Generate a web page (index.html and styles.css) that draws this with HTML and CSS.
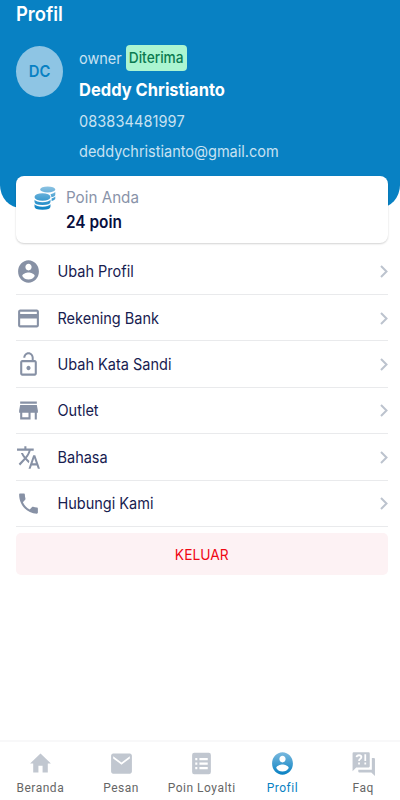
FILE: index.html
```html
<!DOCTYPE html>
<html lang="id">
<head>
<meta charset="utf-8">
<title>Profil</title>
<link rel="stylesheet" href="styles.css">
</head>
<body>
<div class="screen">
  <header class="hero">
    <h1 class="title"><span class="tall">Profil</span></h1>
    <div class="person">
      <div class="avatar"><span class="tall">DC</span></div>
      <div class="details">
        <div class="role"><span class="tall soft">owner</span><span class="badge"><span class="tall">Diterima</span></span></div>
        <div class="name"><span class="tall">Deddy Christianto</span></div>
        <div class="contact phone"><span class="tall soft">083834481997</span></div>
        <div class="contact mail"><span class="tall soft">deddychristianto@gmail.com</span></div>
      </div>
    </div>
  </header>
  <main class="content">
    <section class="points">
      <svg class="coins" viewBox="0 0 22 24">
        <defs><linearGradient id="blue" x1="0" y1="0" x2="0" y2="1"><stop offset="0" stop-color="#7bb9de"/><stop offset="1" stop-color="#0881c3"/></linearGradient>
        <linearGradient id="coin" gradientUnits="userSpaceOnUse" x1="0" y1="0" x2="0" y2="24"><stop offset="0" stop-color="#8fc4e3"/><stop offset="1" stop-color="#0881c3"/></linearGradient></defs>
        <g fill="url(#coin)"><ellipse cx="13.700" cy="3.400" rx="7.500" ry="3"/><path d="M16.500 8.200q3.500-.6 4.800-2.200v2.400q0 2-3.800 2.800zM17.600 12.400q2.700-.6 3.700-1.800v1.900q0 1.500-3.700 2.400z"/><ellipse cx="8.500" cy="11" rx="8" ry="3.800"/><path d="M.5 13.800q2 2.400 8 2.400t8-2.400v2q0 3.200-8 3.200t-8-3.200zM.5 18.300q2 2.400 8 2.400t8-2.400v2.200q0 3.200-8 3.200t-8-3.200z"/></g>
      </svg>
      <div><div class="points-label"><span class="tall">Poin Anda</span></div><div class="points-value"><span class="tall">24 poin</span></div></div>
    </section>
    <nav class="menu">
      <a class="item"><svg class="icon" viewBox="0 0 24 24" preserveAspectRatio="none"><path d="M12 2C6.480 2 2 6.480 2 12s4.480 10 10 10 10-4.480 10-10S17.520 2 12 2zm0 3c1.660 0 3 1.340 3 3s-1.340 3-3 3-3-1.340-3-3 1.340-3 3-3zm0 14.200c-2.500 0-4.710-1.280-6-3.220.030-1.990 4-3.080 6-3.080 1.990 0 5.970 1.090 6 3.080-1.290 1.940-3.500 3.220-6 3.220z"/></svg><span class="tall">Ubah Profil</span><svg class="chevron" viewBox="0 0 8 13"><path d="M1 1l5.500 5.500L1 12"/></svg></a>
      <a class="item"><svg class="icon" viewBox="0 0 24 24" preserveAspectRatio="none"><path d="M20 4H4c-1.110 0-1.990.890-1.990 2L2 18c0 1.110.890 2 2 2h16c1.110 0 2-.890 2-2V6c0-1.110-.890-2-2-2zm0 14H4v-6h16v6zm0-10H4V6h16v2z"/></svg><span class="tall">Rekening Bank</span><svg class="chevron" viewBox="0 0 8 13"><path d="M1 1l5.500 5.500L1 12"/></svg></a>
      <a class="item"><svg class="icon" viewBox="0 0 24 24" preserveAspectRatio="none"><path d="M12 17c1.100 0 2-.9 2-2s-.9-2-2-2-2 .9-2 2 .9 2 2 2zm6-9h-1V6c0-2.760-2.240-5-5-5S7 3.240 7 6h1.900c0-1.710 1.390-3.100 3.100-3.100 1.710 0 3.100 1.390 3.100 3.100v2H6c-1.100 0-2 .9-2 2v10c0 1.100.9 2 2 2h12c1.100 0 2-.9 2-2V10c0-1.100-.9-2-2-2zm0 12H6V10h12v10z"/></svg><span class="tall">Ubah Kata Sandi</span><svg class="chevron" viewBox="0 0 8 13"><path d="M1 1l5.500 5.500L1 12"/></svg></a>
      <a class="item"><svg class="icon" viewBox="0 0 24 24" preserveAspectRatio="none"><path d="M20 4H4v2h16V4zm1 10v-2l-1-5H4l-1 5v2h1v6h10v-6h4v6h2v-6h1zm-9 4H6v-4h6v4z"/></svg><span class="tall">Outlet</span><svg class="chevron" viewBox="0 0 8 13"><path d="M1 1l5.500 5.500L1 12"/></svg></a>
      <a class="item"><svg class="icon" viewBox="0 0 24 24" preserveAspectRatio="none"><path d="M12.870 15.070l-2.540-2.510.030-.030c1.740-1.940 2.980-4.170 3.710-6.530H17V4h-7V2H8v2H1v1.990h11.170C11.500 7.920 10.440 9.750 9 11.350 8.070 10.320 7.300 9.190 6.690 8h-2c.730 1.630 1.730 3.170 2.980 4.560l-5.090 5.020L4 19l5-5 3.110 3.110.760-2.040zM18.500 10h-2L12 22h2l1.120-3h4.750L21 22h2l-4.500-12zm-2.620 7l1.620-4.330L19.120 17h-3.240z"/></svg><span class="tall">Bahasa</span><svg class="chevron" viewBox="0 0 8 13"><path d="M1 1l5.500 5.500L1 12"/></svg></a>
      <a class="item"><svg class="icon" viewBox="0 0 24 24" preserveAspectRatio="none"><path d="M6.620 10.790c1.440 2.830 3.760 5.140 6.590 6.590l2.200-2.200c.270-.270.670-.360 1.020-.240 1.120.370 2.330.570 3.570.570.550 0 1 .450 1 1V20c0 .550-.450 1-1 1-9.390 0-17-7.610-17-17 0-.550.450-1 1-1h3.500c.550 0 1 .450 1 1 0 1.250.2 2.450.570 3.570.110.350.030.740-.250 1.020l-2.200 2.200z"/></svg><span class="tall">Hubungi Kami</span><svg class="chevron" viewBox="0 0 8 13"><path d="M1 1l5.500 5.500L1 12"/></svg></a>
    </nav>
    <button class="logout"><span class="tall">KELUAR</span></button>
  </main>
  <nav class="tabs">
    <a class="tab"><svg class="icon" viewBox="0 0 24 24" preserveAspectRatio="none"><path d="M10 20v-6h4v6h5v-8h3L12 3 2 12h3v8z"/></svg><span class="tall">Beranda</span></a>
    <a class="tab"><svg class="icon" viewBox="0 0 24 24" preserveAspectRatio="none"><path d="M20 3H4c-1.100 0-2 .9-2 2v14c0 1.100.9 2 2 2h16c1.100 0 2-.9 2-2V5c0-1.100-.9-2-2-2zm0 4.500l-8 5.500-8-5.500V5.500l8 5.500 8-5.500z"/></svg><span class="tall">Pesan</span></a>
    <a class="tab"><svg class="icon" viewBox="0 0 24 24" preserveAspectRatio="none"><path fill-rule="evenodd" d="M5 2.500h14q2 0 2 2v15q0 2-2 2H5q-2 0-2-2v-15q0-2 2-2zm1 4.500v2h2V7zm4 0v2h8V7zm-4 4v2h2v-2zm4 0v2h8v-2zm-4 4v2h2v-2zm4 0v2h8v-2z"/></svg><span class="tall">Poin Loyalti</span></a>
    <a class="tab active"><svg class="icon" viewBox="0 0 24 24" preserveAspectRatio="none"><path d="M12 2C6.480 2 2 6.480 2 12s4.480 10 10 10 10-4.480 10-10S17.520 2 12 2zm0 3c1.660 0 3 1.340 3 3s-1.340 3-3 3-3-1.340-3-3 1.340-3 3-3zm0 14.200c-2.500 0-4.710-1.280-6-3.220.030-1.990 4-3.080 6-3.080 1.990 0 5.970 1.090 6 3.080-1.290 1.940-3.500 3.220-6 3.220z"/></svg><span class="tall">Profil</span></a>
    <a class="tab"><svg class="icon" viewBox="0 0 24 24" preserveAspectRatio="none"><path d="M2.500 2h14.500q1 0 1 1v11.500q0 1-1 1H5l-3.500 3.300V3q0-1 1-1zM20 7H22q1 0 1 1v15L19.500 20H8q-1 0-1-1v-1.500h13z"/><path class="mark" d="M5.300 6.400q.3-1.800 2.400-1.800t2.300 1.600q0 1-1.300 1.800-1 .6-1 1.800M7.700 11v1.900M13.700 3.800v6M13.700 11v1.900"/></svg><span class="tall">Faq</span></a>
  </nav>
</div>
</body>
</html>
```
FILE: styles.css
```css
* { box-sizing: border-box; }
body { margin: 0; background: #fff; font-family: Inter, sans-serif; }
.screen { width: 400px; height: 800px; display: flex; flex-direction: column; overflow: hidden; }
.tall { display: inline-block; transform: scaleY(1.09); white-space: nowrap; }
.hero { height: 208px; flex: none; padding: 3px 16px 0; background: #0881c3; border-radius: 0 0 21px 21px / 0 0 23px 23px; color: #fff; }
.title { margin: 0; font-size: 18.400px; line-height: 21px; font-weight: 600; }
.person { display: flex; gap: 16px; margin-top: 20px; }
.avatar { width: 47px; height: 51px; margin-top: 2px; border-radius: 50%; background: #8ec5e4; color: #0881c3; display: flex; align-items: center; justify-content: center; font-size: 14.800px; font-weight: 600; }
.role { display: flex; align-items: center; gap: 4px; height: 28px; font-size: 14.500px; }
.soft { color: #c8e2f2; }
.badge { height: 26px; padding: 0 3px; display: flex; align-items: center; border-radius: 4px; background: #abf5d1; color: #0a7a50; font-weight: 500; font-size: 13.700px; }
.name { margin-top: 8px; line-height: 21px; font-size: 16.500px; font-weight: 700; }
.contact { line-height: 20px; font-size: 14.500px; margin-top: 10px; }
.phone { margin-top: 10.500px; letter-spacing: .1px; }
.content { flex: 1; padding: 0 12.500px 0 16px; }
.points { position: relative; height: 67px; margin-top: -32px; padding: 10px 18px; display: flex; gap: 10px; background: #fff; border-radius: 8px; box-shadow: 0 1px 2px rgba(0,0,0,.18); }
.coins { width: 22px; height: 24px; }
.points-label { color: #8993a9; font-size: 15.200px; line-height: 24px; }
.points-value { color: #091040; font-size: 15.400px; line-height: 25px; font-weight: 600; }
.menu { margin-top: 5.600px; }
.item { height: 46.400px; display: flex; align-items: center; padding-top: 1px; border-bottom: 1.500px solid #e9eaec; color: #172050; font-size: 14.500px; }
.icon { width: 25px; height: 27px; fill: #8791a5; }
.item .icon { margin-right: 16.500px; }
.chevron { width: 8px; height: 13px; margin-left: auto; fill: none; stroke: #bcc3ce; stroke-width: 2; }
.logout { display: block; width: 100%; height: 42px; margin-top: 6px; border: 0; border-radius: 5px; background: #fdf2f4; color: #f00814; font: 13.800px Inter, sans-serif; }
.logout .tall { position: relative; top: 1px; }
.tabs { width: 403.500px; height: 60px; flex: none; display: grid; grid-template-columns: repeat(5, 1fr); border-top: 2px solid #f8f8f9; }
.tab { display: flex; flex-direction: column; align-items: center; padding-top: 8px; color: #666; font: 12px/22px Roboto, sans-serif; letter-spacing: .5px; }
.tab .icon { fill: #c1c7d0; }
.tab.active { color: #0881c3; }
.tab.active .icon { fill: url(#blue); }
.tab .icon .mark { fill: none; stroke: #fff; stroke-width: 1.700; }
```
